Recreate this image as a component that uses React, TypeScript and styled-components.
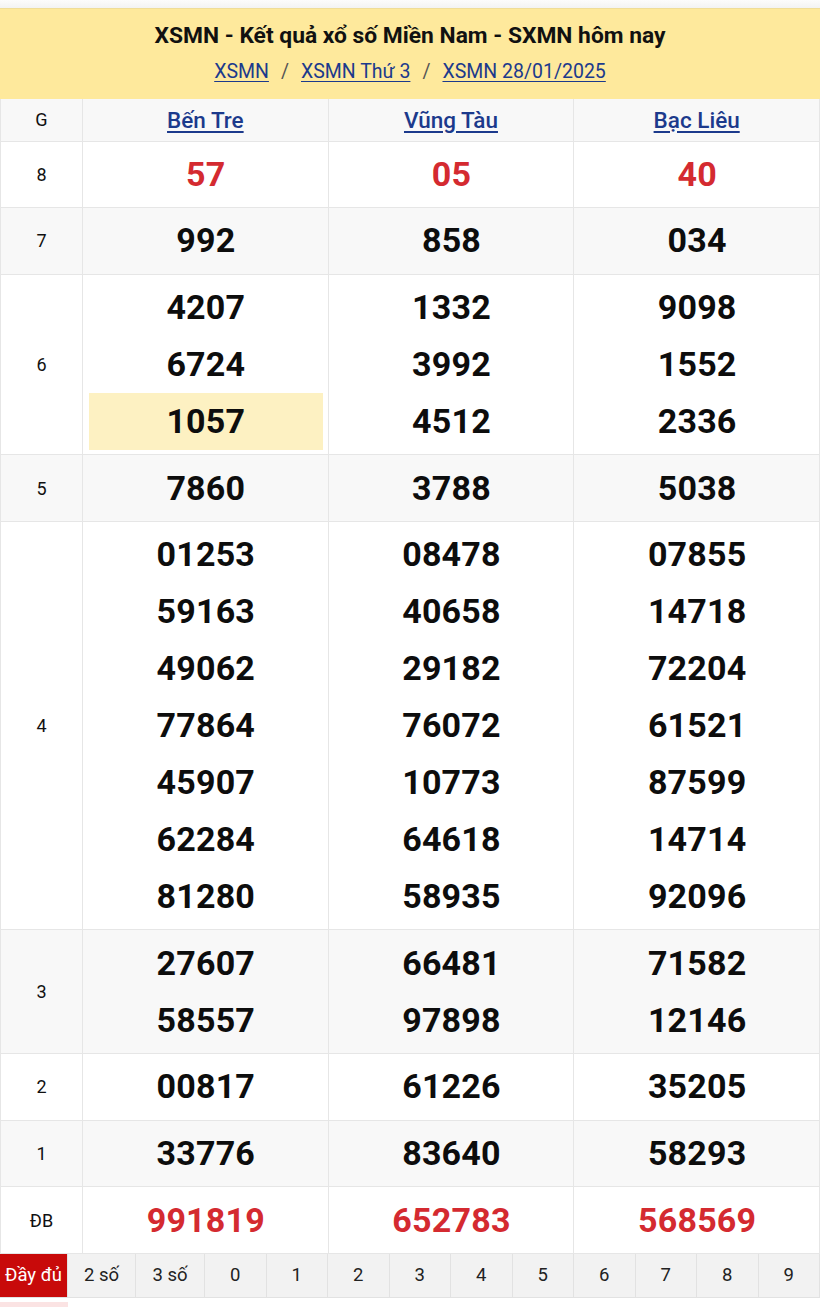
import React from 'react';
import styled, { createGlobalStyle } from 'styled-components';

const GlobalStyle = createGlobalStyle`
  html, body {
    margin: 0;
    padding: 0;
    background: #ffffff;
    font-family: Roboto, 'Liberation Sans', Arial, sans-serif;
  }
  * {
    box-sizing: border-box;
  }
`;

interface Prize {
  label: string;
  values: string[][];
  special?: boolean;
}

const provinces = ['Bến Tre', 'Vũng Tàu', 'Bạc Liêu'];

const prizes: Prize[] = [
  { label: '8', values: [['57'], ['05'], ['40']], special: true },
  { label: '7', values: [['992'], ['858'], ['034']] },
  {
    label: '6',
    values: [
      ['4207', '6724', '1057'],
      ['1332', '3992', '4512'],
      ['9098', '1552', '2336'],
    ],
  },
  { label: '5', values: [['7860'], ['3788'], ['5038']] },
  {
    label: '4',
    values: [
      ['01253', '59163', '49062', '77864', '45907', '62284', '81280'],
      ['08478', '40658', '29182', '76072', '10773', '64618', '58935'],
      ['07855', '14718', '72204', '61521', '87599', '14714', '92096'],
    ],
  },
  {
    label: '3',
    values: [
      ['27607', '58557'],
      ['66481', '97898'],
      ['71582', '12146'],
    ],
  },
  { label: '2', values: [['00817'], ['61226'], ['35205']] },
  { label: '1', values: [['33776'], ['83640'], ['58293']] },
  { label: 'ĐB', values: [['991819'], ['652783'], ['568569']], special: true },
];

const filters = ['Đầy đủ', '2 số', '3 số', '0', '1', '2', '3', '4', '5', '6', '7', '8', '9'];

const Page = styled.div`
  padding-top: 8px;
  background: linear-gradient(#fcfcfc, #f3f3f3 8px, #ffffff 8px);
`;

const Header = styled.div`
  background: #fee99c;
  border-top: 1px solid #efdd98;
  padding: 14px 8px 15px;
  text-align: center;
`;

const Title = styled.h1`
  margin: 0;
  font-size: 22.8px;
  font-weight: 700;
  color: #111;
  line-height: 26px;
`;

const Crumbs = styled.div`
  margin-top: 11px;
  font-size: 19.5px;
  line-height: 24px;
  color: #555;
  display: flex;
  justify-content: center;
  gap: 12px;
`;

const Crumb = styled.a`
  color: #1c3a8c;
  text-decoration: underline;
  text-underline-offset: 3px;
`;

const Table = styled.table`
  width: 100%;
  border-collapse: collapse;
  table-layout: fixed;
`;

const Row = styled.tr<{ $alt?: boolean }>`
  background: ${(p) => (p.$alt ? '#f8f8f8' : '#ffffff')};
`;

const HeadCell = styled.th<{ $narrow?: boolean }>`
  width: ${(p) => (p.$narrow ? '82px' : 'auto')};
  height: 42px;
  border: 1px solid #e6e6e6;
  border-top: none;
  font-weight: ${(p) => (p.$narrow ? 400 : 500)};
  font-size: ${(p) => (p.$narrow ? '18px' : '22.5px')};
  color: #111;
  padding: 0;
`;

const ProvinceLink = styled.a`
  color: #1c3a8c;
  text-decoration: underline;
  text-underline-offset: 3px;
`;

const LabelCell = styled.td`
  border: 1px solid #e6e6e6;
  text-align: center;
  font-size: 18px;
  color: #111;
  padding: 0;
`;

const ValueCell = styled.td`
  border: 1px solid #e6e6e6;
  padding: 4.3px 0;
  vertical-align: middle;
`;

const Num = styled.div<{ $special?: boolean; $marked?: boolean }>`
  height: 57px;
  line-height: 57px;
  margin: 0 5px 0 6px;
  text-align: center;
  font-size: 34px;
  font-weight: 700;
  letter-spacing: 0.2px;
  color: ${(p) => (p.$special ? '#d42a30' : '#0d0d0d')};
  background: ${(p) => (p.$marked ? '#fdf1c2' : 'transparent')};
`;

const FilterBar = styled.div`
  display: grid;
  grid-template-columns: 68px 68px 69px repeat(10, 1fr);
  background: #f2f2f2;
  border-bottom: 1px solid #e2e2e2;
`;

const Filter = styled.div<{ $active?: boolean }>`
  height: 43px;
  display: flex;
  align-items: center;
  justify-content: center;
  font-size: 18.5px;
  color: ${(p) => (p.$active ? '#ffffff' : '#222')};
  background: ${(p) => (p.$active ? '#c80a0a' : 'transparent')};
  border-right: 1px solid #e2e2e2;
  white-space: nowrap;
`;

const NextStrip = styled.div`
  margin-top: 4px;
  width: 68px;
  height: 5px;
  background: #fbe3e3;
`;

export default function App() {
  return (
    <Page>
      <GlobalStyle />
      <Header>
        <Title>XSMN - Kết quả xổ số Miền Nam - SXMN hôm nay</Title>
        <Crumbs>
          <Crumb>XSMN</Crumb>
          <span>/</span>
          <Crumb>XSMN Thứ 3</Crumb>
          <span>/</span>
          <Crumb>XSMN 28/01/2025</Crumb>
        </Crumbs>
      </Header>
      <Table>
        <thead>
          <Row $alt>
            <HeadCell $narrow>G</HeadCell>
            {provinces.map((p) => (
              <HeadCell key={p}>
                <ProvinceLink>{p}</ProvinceLink>
              </HeadCell>
            ))}
          </Row>
        </thead>
        <tbody>
          {prizes.map((prize, i) => (
            <Row key={prize.label} $alt={i % 2 === 1}>
              <LabelCell>{prize.label}</LabelCell>
              {prize.values.map((col, c) => (
                <ValueCell key={c}>
                  {col.map((v, k) => (
                    <Num
                      key={k}
                      $special={prize.special}
                      $marked={prize.label === '6' && c === 0 && k === 2}
                    >
                      {v}
                    </Num>
                  ))}
                </ValueCell>
              ))}
            </Row>
          ))}
        </tbody>
      </Table>
      <FilterBar>
        {filters.map((f, i) => (
          <Filter key={f + i} $active={i === 0}>
            {f}
          </Filter>
        ))}
      </FilterBar>
      <NextStrip />
    </Page>
  );
}
